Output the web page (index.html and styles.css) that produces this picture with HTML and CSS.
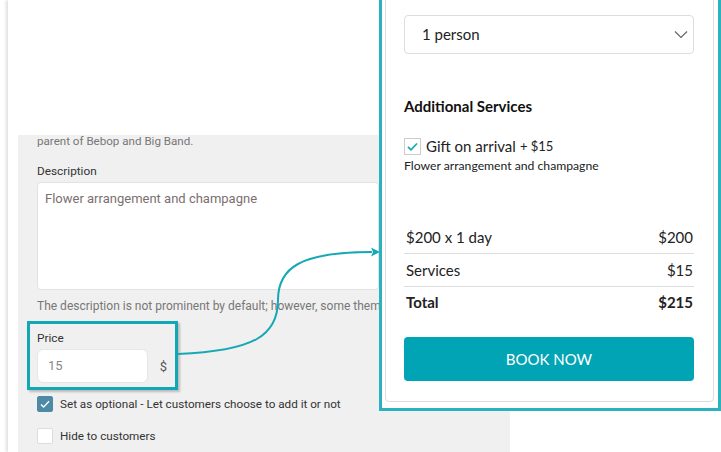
FILE: index.html
```html
<!DOCTYPE html>
<html lang="en">
<head>
    <meta charset="UTF-8">
    <title>Service price</title>
<link rel="stylesheet" href="styles.css">
</head>
<body>
    <div class="page">
        <div class="page-top"></div>
        <div class="panel">
            <p class="hint top-hint">parent of Bebop and Big Band.</p>
            <div class="field-label">Description</div>
            <div class="textarea">Flower arrangement and champagne</div>
            <p class="hint help">The description is not prominent by default; however, some themes</p>
            <div class="price-box">
                <div class="field-label">Price</div>
                <div class="price-row">
                    <div class="price-input">15</div>
                    <span class="currency">$</span>
                </div>
            </div>
            <div class="check-row">
                <span class="box checked">
                    <svg width="12" height="12" viewBox="0 0 12 12"><path d="M2 6.5l2.6 2.6L10 3.2" fill="none" stroke="#fff" stroke-width="1.4"/></svg>
                </span>
                Set as optional - Let customers choose to add it or not
            </div>
            <div class="check-row second">
                <span class="box"></span>
                Hide to customers
            </div>
        </div>
    </div>

    <div class="preview">
        <div class="card">
            <div class="select">
                <span>1 person</span>
                <svg width="14" height="9" viewBox="0 0 14 9"><path d="M1 1.5l6 6 6-6" fill="none" stroke="#666" stroke-width="1.2"/></svg>
            </div>
            <h3 class="services-title">Additional Services</h3>
            <div class="gift">
                <span class="gift-box">
                    <svg width="13" height="13" viewBox="0 0 13 13"><path d="M2 6.8l3 3L11 3.5" fill="none" stroke="#16a9b7" stroke-width="1.8"/></svg>
                </span>
                Gift on arrival <small>+ $15</small>
            </div>
            <div class="gift-desc">Flower arrangement and champagne</div>
            <div class="lines">
                <div class="line"><span>$200 x 1 day</span><span>$200</span></div>
                <div class="line"><span>Services</span><span>$15</span></div>
                <div class="line total"><span>Total</span><span>$215</span></div>
            </div>
            <button class="book">BOOK NOW</button>
        </div>
    </div>

    <svg class="arrow" width="721" height="452" viewBox="0 0 721 452">
        <path d="M178 354 C 255 351, 278 335, 278 300 C 278 268, 300 252, 372 252" fill="none" stroke="#17a8b5" stroke-width="2"/>
        <path d="M371 247.5 L380 252 L371 256.5 L373 252 Z" fill="#17a8b5"/>
    </svg>
</body>
</html>
```
FILE: styles.css
```css
*{
    margin: 0;
    padding: 0;
    box-sizing: border-box;
}
body{
    width: 721px;
    height: 452px;
    overflow: hidden;
    background: #fff;
    position: relative;
    font-family: Roboto, "Liberation Sans", sans-serif;
}
.page{
    margin-left: 8px;
    height: 452px;
    background: #fff;
    box-shadow: -2px 0 3px rgba(0,0,0,.13);
}
.page-top{
    height: 135px;
}
.panel{
    margin-left: 10px;
    width: 492px;
    height: 317px;
    background: #f0f0f0;
    padding-left: 19px;
    overflow: hidden;
}
.hint{
    font-size: 12px;
    line-height: 14px;
    color: #777;
    white-space: nowrap;
}
.top-hint{
    font-size: 11.6px;
    line-height: 13px;
}
.field-label{
    font-size: 11.8px;
    line-height: 16px;
    color: #333;
}
.panel > .field-label{
    margin-top: 15px;
}
.textarea{
    margin-top: 3px;
    width: 342px;
    height: 108px;
    background: #fff;
    border: 1px solid #e2e2e2;
    border-radius: 4px;
    padding: 8px 7px;
    font-size: 13px;
    color: #7b6f70;
}
.help{
    margin-top: 9px;
}
.price-box{
    margin: 8px 0 0 -10px;
    width: 151px;
    border: 3px solid #12a7b4;
    padding: 6px 7px 4px 7px;
    box-shadow: 2px 2px 2px rgba(0,0,0,.22);
}
.price-row{
    display: flex;
    align-items: center;
    justify-content: space-between;
    margin-top: 3px;
}
.price-input{
    width: 111px;
    height: 34px;
    background: #fff;
    border: 1px solid #e6e6e6;
    border-radius: 6px;
    padding-left: 10px;
    line-height: 32px;
    font-size: 13px;
    color: #888;
}
.currency{
    font-size: 13px;
    color: #555;
    margin-right: 1px;
}
.check-row{
    display: flex;
    align-items: center;
    margin-top: 6px;
    height: 16px;
    font-size: 11.7px;
    color: #333;
}
.check-row.second{
    margin-top: 16px;
}
.box{
    width: 16px;
    height: 16px;
    margin-right: 7px;
    border: 1px solid #ddd;
    border-radius: 2px;
    background: #fff;
    display: flex;
    align-items: center;
    justify-content: center;
}
.box.checked{
    background: #4e8aa6;
    border-color: #4e8aa6;
}

/* preview on top */
.preview{
    position: absolute;
    left: 379px;
    top: -10px;
    width: 342px;
    height: 421px;
    border: 3px solid #2ab2bf;
    background: #fff;
    padding: 3px 4px 6px 3px;
}
.card{
    height: 100%;
    border: 1px solid #dcdcdc;
    border-radius: 4px;
    padding: 18px 19px 19px 18px;
    display: flex;
    flex-direction: column;
    font-family: Lato, "Open Sans", sans-serif;
    color: #222;
}
.select{
    height: 39px;
    border: 1px solid #ddd;
    border-radius: 4px;
    display: flex;
    align-items: center;
    justify-content: space-between;
    padding: 0 5px 1px 17px;
    font-size: 15px;
}
.services-title{
    margin-top: 42px;
    font-size: 15px;
    line-height: 20px;
    font-weight: 700;
    color: #111;
}
.gift{
    margin-top: 20px;
    display: flex;
    align-items: center;
    height: 20px;
    font-size: 15px;
}
.gift small{
    font-size: 13px;
    margin-left: 4px;
}
.gift-box{
    width: 17px;
    height: 17px;
    border: 1px solid #ccc;
    margin-right: 5px;
    display: flex;
    align-items: center;
    justify-content: center;
}
.gift-desc{
    margin-top: 2px;
    font-size: 12.2px;
    line-height: 16px;
}
.lines{
    margin-top: 47px;
}
.line{
    display: flex;
    justify-content: space-between;
    align-items: center;
    height: 33px;
    line-height: 18px;
    border-bottom: 1px solid #ddd;
    padding: 0 1px 1px 2px;
    font-size: 15px;
}
.line.total{
    border-bottom: none;
    font-weight: 700;
    height: 31px;
    padding-bottom: 2px;
}
.book{
    margin-top: 19px;
    height: 44px;
    border: none;
    border-radius: 4px;
    background: #00a4b4;
    color: #fff;
    font-family: Lato, "Open Sans", sans-serif;
    font-size: 15px;
    font-weight: 400;
}
.arrow{
    position: absolute;
    left: 0;
    top: 0;
}
```
